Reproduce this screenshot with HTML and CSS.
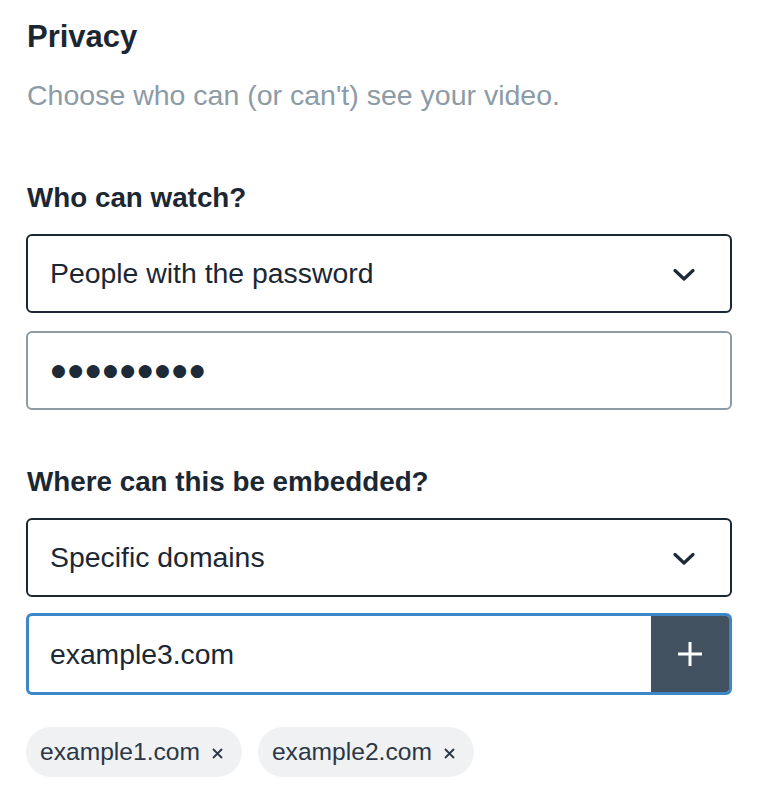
FILE: index.html
```html
<!DOCTYPE html>
<html lang="en">
<head>
<meta charset="utf-8">
<title>Privacy</title>
<link rel="stylesheet" href="styles.css">
</head>
<body>
<main class="panel">
  <h1 class="title">Privacy</h1>
  <p class="subtitle">Choose who can (or can't) see your video.</p>

  <section class="group first">
    <h2 class="label">Who can watch?</h2>
    <div class="select">
      <span class="select-text">People with the password</span>
      <svg class="chevron" width="22" height="14" viewBox="0 0 22 14" aria-hidden="true"><path d="M2 2.5 L11 11 L20 2.5" fill="none" stroke="#1d2a38" stroke-width="3.2" stroke-linecap="round" stroke-linejoin="round"/></svg>
    </div>
    <div class="input password"><span class="dots">●●●●●●●●●</span></div>
  </section>

  <section class="group second">
    <h2 class="label">Where can this be embedded?</h2>
    <div class="select">
      <span class="select-text">Specific domains</span>
      <svg class="chevron" width="22" height="14" viewBox="0 0 22 14" aria-hidden="true"><path d="M2 2.5 L11 11 L20 2.5" fill="none" stroke="#1d2a38" stroke-width="3.2" stroke-linecap="round" stroke-linejoin="round"/></svg>
    </div>
    <div class="input domain">
      <span class="domain-text">example3.com</span>
      <span class="add-btn">
        <svg width="24" height="24" viewBox="0 0 24 24" aria-hidden="true"><path d="M12 1.5 V22.5 M1.5 12 H22.5" stroke="#ffffff" stroke-width="3" stroke-linecap="square"/></svg>
      </span>
    </div>
    <div class="chips">
      <span class="chip">example1.com<svg class="x" width="11" height="11" viewBox="0 0 11 11" aria-hidden="true"><path d="M1 1 L10 10 M10 1 L1 10" stroke="#2b3744" stroke-width="1.8"/></svg></span>
      <span class="chip">example2.com<svg class="x" width="11" height="11" viewBox="0 0 11 11" aria-hidden="true"><path d="M1 1 L10 10 M10 1 L1 10" stroke="#2b3744" stroke-width="1.8"/></svg></span>
    </div>
  </section>
</main>
</body>
</html>
```

FILE: styles.css
```css
* { box-sizing: border-box; }
html, body { margin: 0; padding: 0; background: #ffffff; }
body {
  font-family: "Liberation Sans", Arial, Helvetica, sans-serif;
  color: #1b2733;
}
.panel {
  padding: 19px 34px 0 26px;
  width: 766px;
}
.title {
  margin: 0 0 0 1px;
  font-size: 31px;
  font-weight: 700;
  line-height: 36px;
  color: #1b2733;
}
.subtitle {
  margin: 23px 0 0 1px;
  font-size: 28.5px;
  line-height: 34px;
  color: #8c9ba6;
}
.group.first { margin-top: 70px; }
.group.second { margin-top: 56px; }
.label {
  margin: 0 0 0 1px;
  font-size: 27.8px;
  font-weight: 700;
  line-height: 32px;
  color: #1b2733;
}
.select {
  margin-top: 20px;
  height: 79px;
  border: 2px solid #1b2733;
  border-radius: 6px;
  display: flex;
  align-items: center;
  justify-content: space-between;
  padding: 0 35px 0 22px;
  font-size: 28.4px;
}
.chevron { display: block; margin-top: 2px; }
.input {
  margin-top: 18px;
  height: 79px;
  border: 2px solid #8d9ba5;
  border-radius: 6px;
  display: flex;
  align-items: center;
  font-size: 28.3px;
}
.password { padding-left: 23px; }
.dots {
  font-family: "DejaVu Sans", sans-serif;
  font-size: 17px;
  letter-spacing: 2.5px;
  color: #1d2a38;
  line-height: 1;
}
.domain {
  margin-top: 16px;
  height: 82px;
  border: 3px solid #3b87c8;
  padding-left: 21px;
  overflow: hidden;
}
.domain-text { flex: 1; }
.add-btn {
  width: 78px;
  align-self: stretch;
  background: #415160;
  display: flex;
  align-items: center;
  justify-content: center;
}
.add-btn svg { display: block; }
.chips {
  margin-top: 32px;
  display: flex;
  gap: 16px;
}
.chip {
  height: 50px;
  border-radius: 25px;
  background: #eff1f3;
  display: inline-flex;
  align-items: center;
  padding: 0 19px 0 14px;
  font-size: 24.6px;
  color: #2b3744;
}
.chip .x { margin-left: 12px; display: block; margin-top: 3px; }
```
